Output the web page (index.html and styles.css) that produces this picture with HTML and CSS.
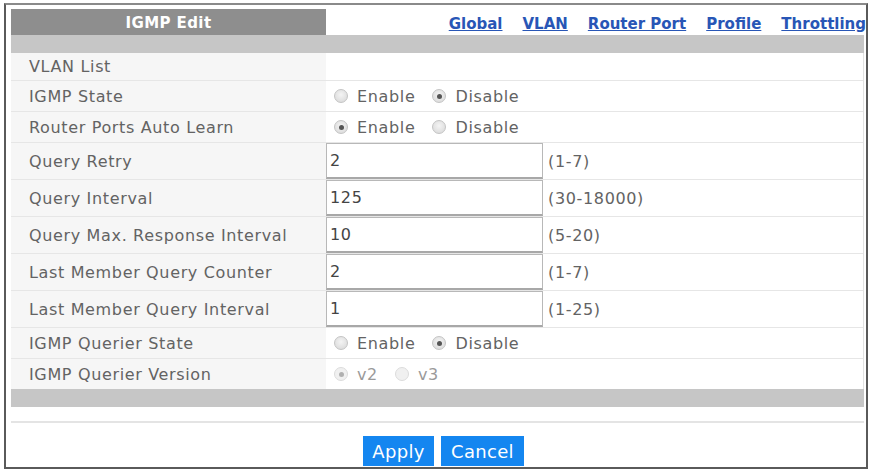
FILE: index.html
```html
<!DOCTYPE html>
<html>
<head>
<meta charset="utf-8">
<title>IGMP Edit</title>
<link rel="stylesheet" href="styles.css">
</head>
<body>
<div class="frame">
  <div class="head">
    <div class="tab">IGMP Edit</div>
    <nav class="links">
      <a href="#">Global</a>
      <a href="#">VLAN</a>
      <a href="#">Router Port</a>
      <a href="#">Profile</a>
      <a href="#">Throttling</a>
    </nav>
  </div>
  <div class="band"></div>
  <div class="form">
    <div class="row r-short"><div class="label">VLAN List</div><div class="field"></div></div>
    <div class="row r-radio"><div class="label">IGMP State</div>
      <div class="field">
        <label class="opt"><span class="radio"></span>Enable</label>
        <label class="opt"><span class="radio on"></span>Disable</label>
      </div></div>
    <div class="row r-radio"><div class="label">Router Ports Auto Learn</div>
      <div class="field">
        <label class="opt"><span class="radio on"></span>Enable</label>
        <label class="opt"><span class="radio"></span>Disable</label>
      </div></div>
    <div class="row r-input"><div class="label">Query Retry</div>
      <div class="field"><span class="box">2</span><span class="range">(1-7)</span></div></div>
    <div class="row r-input"><div class="label">Query Interval</div>
      <div class="field"><span class="box">125</span><span class="range">(30-18000)</span></div></div>
    <div class="row r-input"><div class="label">Query Max. Response Interval</div>
      <div class="field"><span class="box">10</span><span class="range">(5-20)</span></div></div>
    <div class="row r-input"><div class="label">Last Member Query Counter</div>
      <div class="field"><span class="box">2</span><span class="range">(1-7)</span></div></div>
    <div class="row r-input"><div class="label">Last Member Query Interval</div>
      <div class="field"><span class="box">1</span><span class="range">(1-25)</span></div></div>
    <div class="row r-radio"><div class="label">IGMP Querier State</div>
      <div class="field">
        <label class="opt"><span class="radio"></span>Enable</label>
        <label class="opt"><span class="radio on"></span>Disable</label>
      </div></div>
    <div class="row r-radio last"><div class="label">IGMP Querier Version</div>
      <div class="field dim">
        <label class="opt"><span class="radio on"></span>v2</label>
        <label class="opt"><span class="radio"></span>v3</label>
      </div></div>
  </div>
  <div class="band"></div>
  <div class="spacer"></div>
  <div class="actions">
    <button class="btn">Apply</button>
    <button class="btn">Cancel</button>
  </div>
</div>
</body>
</html>
```
FILE: styles.css
```css
html, body {
  margin: 0;
  padding: 0;
  background: #fff;
}
body {
  font-family: "DejaVu Sans", "Liberation Sans", sans-serif;
  color: #636363;
}
.frame {
  box-sizing: border-box;
  width: 864px;
  height: 466px;
  margin: 3px 0 0 4px;
  border: 2px solid #5a5a5a;
  border-top-color: #8a8a8a;
  padding: 4px 2px 0 5px;
  display: flex;
  flex-direction: column;
}
.head {
  display: flex;
  height: 26px;
  align-items: stretch;
}
.tab {
  width: 315px;
  background: #8e8e8e;
  color: #fff;
  font-weight: bold;
  font-size: 15px;
  letter-spacing: 0.4px;
  display: flex;
  align-items: center;
  justify-content: center;
  padding-top: 2px;
  box-sizing: border-box;
}
.links {
  flex: 1;
  display: flex;
  justify-content: flex-end;
  align-items: center;
  gap: 20px;
  padding-top: 3px;
  margin-right: -2px;
}
.links a {
  color: #2856b6;
  font-weight: bold;
  font-size: 15px;
  text-decoration: underline;
}
.band {
  height: 18px;
  background: #c6c6c6;
}
.form {
  border-right: 1px solid #e2e2e2;
}
.row {
  display: flex;
  border-bottom: 1px solid #e6e6e6;
  font-size: 16px;
  letter-spacing: 0.65px;
}
.row.last { border-bottom: none; }
.r-short { height: 27px; }
.r-radio { height: 30px; }
.r-input { height: 36px; }
.label {
  width: 315px;
  box-sizing: border-box;
  padding-left: 18px;
  background: #f6f6f6;
  display: flex;
  align-items: center;
}
.field {
  flex: 1;
  display: flex;
  align-items: center;
  background: #fff;
}
.opt {
  display: flex;
  align-items: center;
  margin-left: 8px;
  margin-right: 5px;
  gap: 9px;
}
.opt + .opt { margin-left: 12px; }
.radio {
  width: 14px;
  height: 14px;
  border-radius: 50%;
  box-sizing: border-box;
  border: 1px solid #c4c4c4;
  background: radial-gradient(circle at 50% 40%, #f4f4f4, #d6d6d6);
  position: relative;
}
.radio.on::after {
  content: "";
  position: absolute;
  left: 3.5px;
  top: 3.5px;
  width: 5px;
  height: 5px;
  border-radius: 50%;
  background: #555;
}
.dim { color: #9a9a9a; }
.dim .radio { border-color: #dcdcdc; background: #f0f0f0; }
.dim .radio.on::after { background: #b0b0b0; }
.box {
  box-sizing: border-box;
  width: 217px;
  height: 36px;
  border: 1px solid #b8b8b8;
  border-bottom: 2px solid #a8a8a8;
  background: #fff;
  display: flex;
  align-items: center;
  padding-left: 3px;
  color: #444;
}
.range {
  margin-left: 5px;
}
.spacer {
  height: 14px;
  border-bottom: 2px solid #e4e4e4;
}
.actions {
  display: flex;
  justify-content: center;
  gap: 7px;
  padding-top: 13px;
  padding-left: 12px;
}
.btn {
  font-family: inherit;
  font-size: 18px;
  letter-spacing: 0.3px;
  color: #fff;
  background: #1486f0;
  border: none;
  height: 30px;
  padding: 0;
}
.btn:first-child { width: 71px; }
.btn:last-child { width: 83px; }
```
